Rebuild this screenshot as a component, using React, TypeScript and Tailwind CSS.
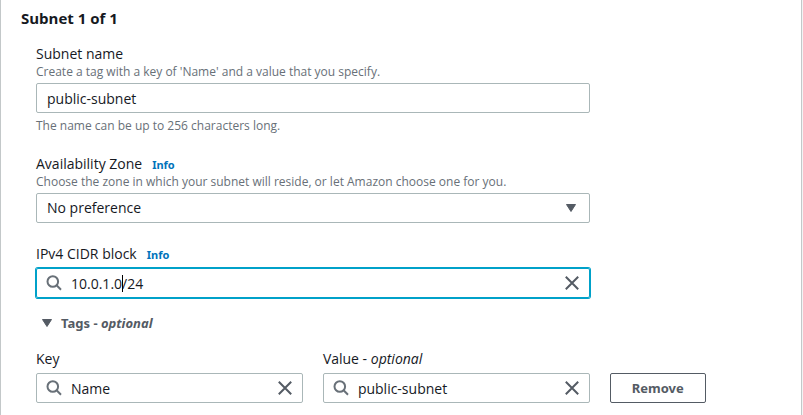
import { useState, type ReactNode } from "react";

function SearchIcon() {
  return (
    <svg viewBox="0 0 16 16" className="pointer-events-none absolute left-[10px] top-[7px] size-4" fill="none" stroke="#687078" strokeWidth="2" aria-hidden="true">
      <circle cx="6.8" cy="6.5" r="5.3" />
      <path d="M10.6 10.3 15 14.7" />
    </svg>
  );
}

function InfoLink() {
  return (
    <a href="#info" className="ml-[10px] font-['Noto_Sans',sans-serif] text-[11px] font-bold leading-4 text-[#0073bb]">
      Info
    </a>
  );
}

function Optional({ children }: { children: ReactNode }) {
  return (
    <>
      {children} - <i>optional</i>
    </>
  );
}

type SearchFieldProps = { id: string; initial: string; active?: boolean };

function SearchField({ id, initial, active = false }: SearchFieldProps) {
  const [value, setValue] = useState(initial);
  return (
    <div className="relative mt-1">
      <SearchIcon />
      <input
        id={id}
        type="text"
        value={value}
        onChange={(e) => setValue(e.target.value)}
        className={
          "block h-[30px] w-full rounded-xs border bg-transparent px-[34px] pt-px text-[14px] text-[#16191f] outline-none " +
          (active ? "border-[#00a1c9] ring-1 ring-[#00a1c9]" : "border-[#aab7b8]")
        }
      />
      {active && <span className="absolute left-[86px] top-[7px] h-[17px] w-px bg-black" />}
      <button type="button" aria-label="Clear" className="absolute right-[10px] top-[7px] size-4" onClick={() => setValue("")}>
        <svg viewBox="0 0 16 16" className="size-4" fill="none" stroke="#545b64" strokeWidth="2" aria-hidden="true">
          <path d="M1.8 1.8 14.2 14.2M14.2 1.8 1.8 14.2" />
        </svg>
      </button>
    </div>
  );
}

export default function App() {
  const [open, setOpen] = useState(true);
  return (
    <div className="min-h-screen bg-[#f2f3f3] pr-px font-['Open_Sans','Noto_Sans',sans-serif] text-[14px] leading-5 text-[#16191f]">
      <section className="min-h-screen border-x border-[#c3c8c9] bg-white px-5 pb-3 pt-2">
        <h2 className="text-[15px] font-bold leading-5">Subnet 1 of 1</h2>
        <div className="mt-4 grid grid-cols-8 gap-x-5 gap-y-[21px] pl-[15px]">
          <div className="col-span-6">
            <label htmlFor="name" className="block">Subnet name</label>
            <p className="text-[12px] leading-4 text-[#687078]">Create a tag with a key of 'Name' and a value that you specify.</p>
            <input
              id="name"
              type="text"
              defaultValue="public-subnet"
              className="mt-[3px] block h-[30px] w-full rounded-xs border border-[#aab7b8] px-[10px] pt-px text-[14px] outline-none"
            />
            <p className="mt-[5px] text-[12px] leading-[15px] text-[#687078]">The name can be up to 256 characters long.</p>
          </div>

          <div className="col-span-6">
            <label htmlFor="zone">Availability Zone</label>
            <InfoLink />
            <p className="text-[12px] leading-4 text-[#687078]">Choose the zone in which your subnet will reside, or let Amazon choose one for you.</p>
            <div className="relative mt-[3px]">
              <select id="zone" className="block h-[30px] w-full appearance-none rounded-xs border border-[#aab7b8] bg-white px-[10px] text-[14px] outline-none">
                <option>No preference</option>
              </select>
              <svg viewBox="0 0 10 8" className="pointer-events-none absolute right-[14px] top-[11px] h-2 w-[10px]" fill="#545b64" stroke="#545b64" strokeLinejoin="round" aria-hidden="true">
                <path d="M.5.5h9L5 7.5Z" />
              </svg>
            </div>
          </div>

          <div className="col-span-6">
            <label htmlFor="cidr">IPv4 CIDR block</label>
            <InfoLink />
            <SearchField id="cidr" initial="10.0.1.0/24" active />
            <button type="button" aria-expanded={open} onClick={() => setOpen(!open)} className="mt-[15px] flex items-center gap-[9px] pl-[6px] font-['Noto_Sans',sans-serif] text-[13px] font-bold leading-5 text-[#545b64]">
              <svg viewBox="0 0 10 8" className="h-2 w-[10px]" fill="#545b64" stroke="#545b64" strokeLinejoin="round" aria-hidden="true">
                <path d="M.5.5h9L5 7.5Z" />
              </svg>
              <span><Optional>Tags</Optional></span>
            </button>
          </div>
        </div>

        {open && (
          <div className="mt-4 grid grid-cols-8 items-end gap-x-5 pl-[15px]">
            <div className="col-span-3">
              <label htmlFor="key" className="block">Key</label>
              <SearchField id="key" initial="Name" />
            </div>
            <div className="col-span-3">
              <label htmlFor="value" className="block"><Optional>Value</Optional></label>
              <SearchField id="value" initial="public-subnet" />
            </div>
            <div className="col-span-2">
              <button type="button" className="h-[30px] rounded-xs border border-[#545b64] px-[21px] font-['Noto_Sans',sans-serif] text-[13px] font-bold text-[#545b64]">
                Remove
              </button>
            </div>
          </div>
        )}
      </section>
    </div>
  );
}
